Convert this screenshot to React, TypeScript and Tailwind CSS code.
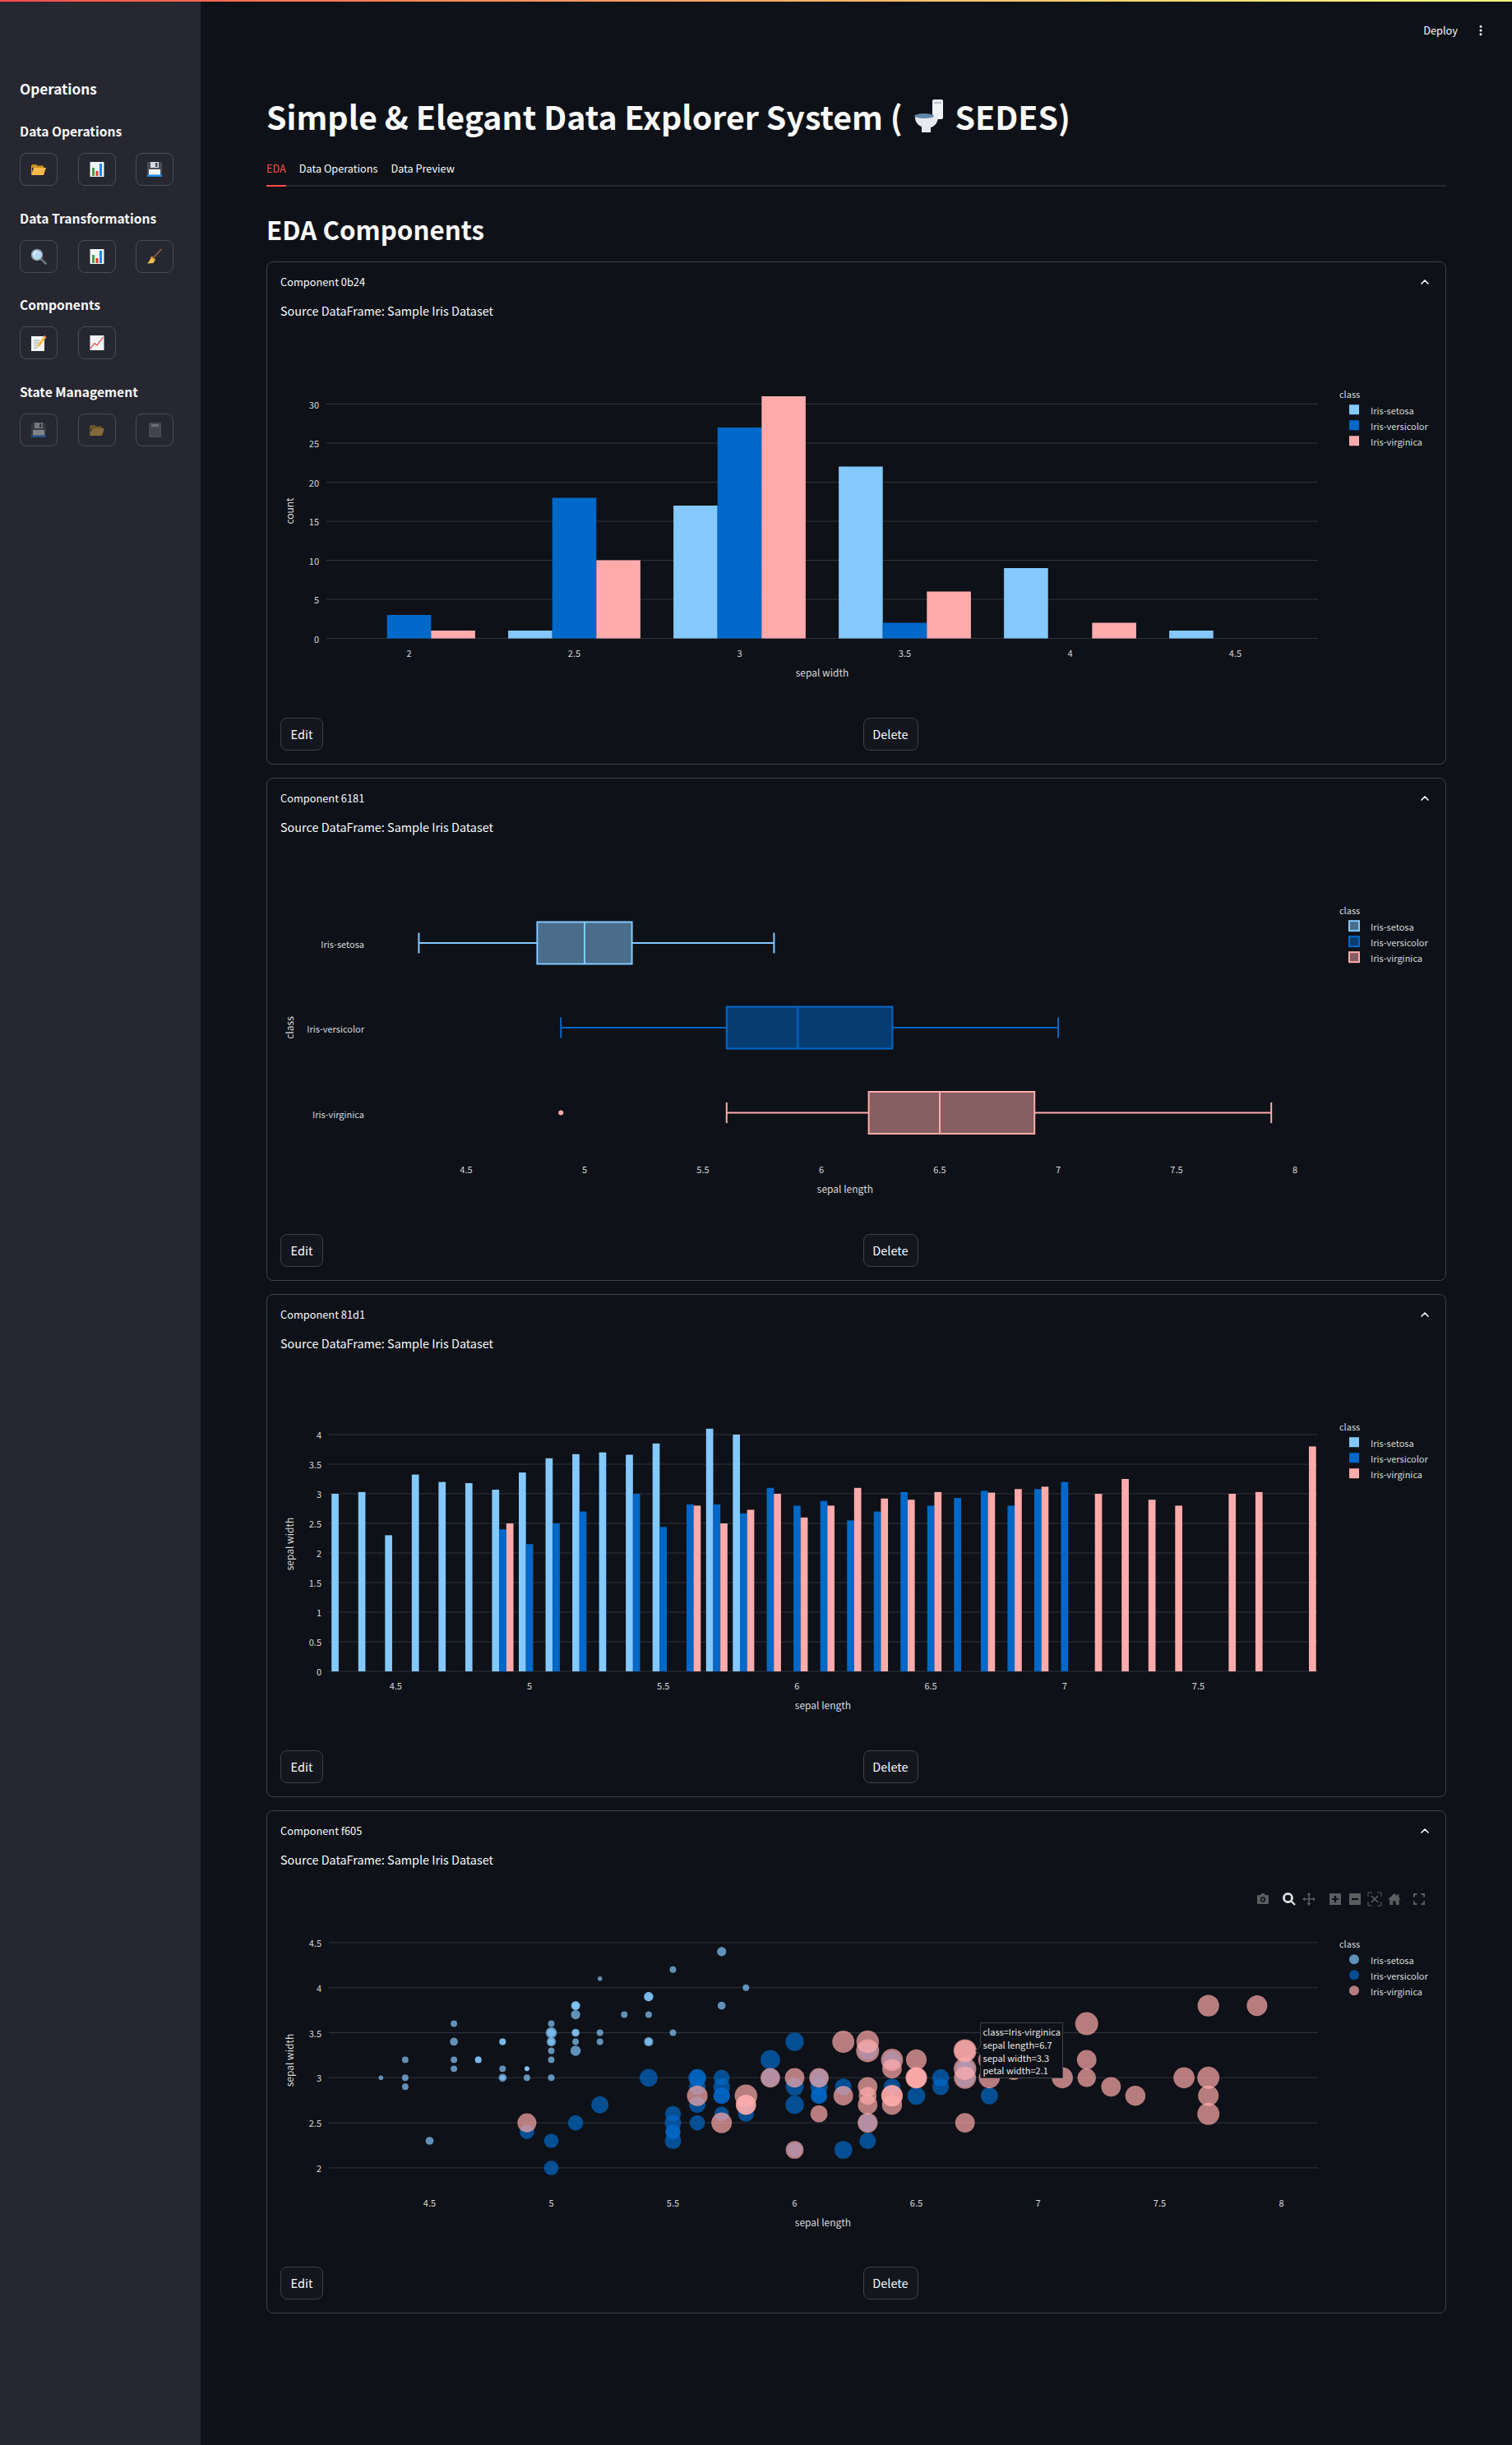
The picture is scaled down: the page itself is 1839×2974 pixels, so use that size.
import React from 'react';
import { ChevronUp, EllipsisVertical } from 'lucide-react';

const BLUE = '#83c9ff';
const NAVY = '#0068c9';
const PINK = '#ffabab';
const GRID = '#31333f';
const TICK = '#d8d9db';
const CLASSES = ['Iris-setosa', 'Iris-versicolor', 'Iris-virginica'];
const COLORS = [BLUE, NAVY, PINK];

// [sepal length, sepal width, petal width]
const SETOSA = [[5.1,3.5,.2],[4.9,3,.2],[4.7,3.2,.2],[4.6,3.1,.2],[5,3.6,.2],[5.4,3.9,.4],[4.6,3.4,.3],[5,3.4,.2],[4.4,2.9,.2],[4.9,3.1,.1],[5.4,3.7,.2],[4.8,3.4,.2],[4.8,3,.1],[4.3,3,.1],[5.8,4,.2],[5.7,4.4,.4],[5.4,3.9,.4],[5.1,3.5,.3],[5.7,3.8,.3],[5.1,3.8,.3],[5.4,3.4,.2],[5.1,3.7,.4],[4.6,3.6,.2],[5.1,3.3,.5],[4.8,3.4,.2],[5,3,.2],[5,3.4,.4],[5.2,3.5,.2],[5.2,3.4,.2],[4.7,3.2,.2],[4.8,3.1,.2],[5.4,3.4,.4],[5.2,4.1,.1],[5.5,4.2,.2],[4.9,3.1,.1],[5,3.2,.2],[5.5,3.5,.2],[4.9,3.1,.1],[4.4,3,.2],[5.1,3.4,.2],[5,3.5,.3],[4.5,2.3,.3],[4.4,3.2,.2],[5,3.5,.6],[5.1,3.8,.4],[4.8,3,.3],[5.1,3.8,.2],[4.6,3.2,.2],[5.3,3.7,.2],[5,3.3,.2]];
const VERSICOLOR = [[7,3.2,1.4],[6.4,3.2,1.5],[6.9,3.1,1.5],[5.5,2.3,1.3],[6.5,2.8,1.5],[5.7,2.8,1.3],[6.3,3.3,1.6],[4.9,2.4,1],[6.6,2.9,1.3],[5.2,2.7,1.4],[5,2,1],[5.9,3,1.5],[6,2.2,1],[6.1,2.9,1.4],[5.6,2.9,1.3],[6.7,3.1,1.4],[5.6,3,1.5],[5.8,2.7,1],[6.2,2.2,1.5],[5.6,2.5,1.1],[5.9,3.2,1.8],[6.1,2.8,1.3],[6.3,2.5,1.5],[6.1,2.8,1.2],[6.4,2.9,1.3],[6.6,3,1.4],[6.8,2.8,1.4],[6.7,3,1.7],[6,2.9,1.5],[5.7,2.6,1],[5.5,2.4,1.1],[5.5,2.4,1],[5.8,2.7,1.2],[6,2.7,1.6],[5.4,3,1.5],[6,3.4,1.6],[6.7,3.1,1.5],[6.3,2.3,1.3],[5.6,3,1.3],[5.5,2.5,1.3],[5.5,2.6,1.2],[6.1,3,1.4],[5.8,2.6,1.2],[5,2.3,1],[5.6,2.7,1.3],[5.7,3,1.2],[5.7,2.9,1.3],[6.2,2.9,1.3],[5.1,2.5,1.1],[5.7,2.8,1.3]];
const VIRGINICA = [[6.3,3.3,2.5],[5.8,2.7,1.9],[7.1,3,2.1],[6.3,2.9,1.8],[6.5,3,2.2],[7.6,3,2.1],[4.9,2.5,1.7],[7.3,2.9,1.8],[6.7,2.5,1.8],[7.2,3.6,2.5],[6.5,3.2,2],[6.4,2.7,1.9],[6.8,3,2.1],[5.7,2.5,2],[5.8,2.8,2.4],[6.4,3.2,2.3],[6.5,3,1.8],[7.7,3.8,2.2],[7.7,2.6,2.3],[6,2.2,1.5],[6.9,3.2,2.3],[5.6,2.8,2],[7.7,2.8,2],[6.3,2.7,1.8],[6.7,3.3,2.1],[7.2,3.2,1.8],[6.2,2.8,1.8],[6.1,3,1.8],[6.4,2.8,2.1],[7.2,3,1.6],[7.4,2.8,1.9],[7.9,3.8,2],[6.4,2.8,2.2],[6.3,2.8,1.5],[6.1,2.6,1.4],[7.7,3,2.3],[6.3,3.4,2.4],[6.4,3.1,1.8],[6,3,1.8],[6.9,3.1,2.1],[6.7,3.1,2.4],[6.9,3.1,2.3],[5.8,2.7,1.9],[6.8,3.2,2.3],[6.7,3.3,2.5],[6.7,3,2.3],[6.3,2.5,1.9],[6.5,3,2],[6.2,3.4,2.3],[5.9,3,1.8]];

// average sepal width per sepal length, as [length, setosa, versicolor, virginica]
const AVERAGES = [[4.3,3],[4.4,3.03],[4.5,2.3],[4.6,3.325],[4.7,3.2],[4.8,3.18],[4.9,3.07,2.4,2.5],[5,3.36,2.15],[5.1,3.6,2.5],[5.2,3.67,2.7],[5.3,3.7],[5.4,3.66,3],[5.5,3.85,2.44],[5.6,0,2.82,2.8],[5.7,4.1,2.82,2.5],[5.8,4,2.67,2.73],[5.9,0,3.1,3],[6,0,2.8,2.6],[6.1,0,2.88,2.8],[6.2,0,2.55,3.1],[6.3,0,2.7,2.92],[6.4,0,3.03,2.9],[6.5,0,2.8,3.03],[6.6,0,2.93],[6.7,0,3.05,3.02],[6.8,0,2.8,3.08],[6.9,0,3.08,3.12],[7,0,3.2],[7.1,0,0,3],[7.2,0,0,3.25],[7.3,0,0,2.9],[7.4,0,0,2.8],[7.6,0,0,3],[7.7,0,0,3.03],[7.9,0,0,3.8]];

const COUNTS = [[2,0,3,1],[2.5,1,18,10],[3,17,27,31],[3.5,22,2,6],[4,9,0,2],[4.5,1,0,0]];

const BOXES = [
  { y: 117, low: 4.3, q1: 4.8, med: 5, q3: 5.2, high: 5.8 },
  { y: 220, low: 4.9, q1: 5.6, med: 5.9, q3: 6.3, high: 7 },
  { y: 323.5, low: 5.6, q1: 6.2, med: 6.5, q3: 6.9, high: 7.9 },
];

function Label({ x, y, children, anchor = 'start', size = 11, fill = TICK }: { x: number; y: number; children: React.ReactNode; anchor?: 'start' | 'middle' | 'end'; size?: number; fill?: string }) {
  return <text x={x} y={y} fontSize={size} fill={fill} textAnchor={anchor} dominantBaseline="central">{children}</text>;
}

function YTitle({ x, y, children }: { x: number; y: number; children: string }) {
  return <text x={x} y={y} fontSize={12} fill={TICK} textAnchor="middle" dominantBaseline="central" transform={`rotate(-90 ${x} ${y})`}>{children}</text>;
}

function Legend({ top, kind }: { top: number; kind: 'square' | 'box' | 'dot' }) {
  return (
    <g>
      <Label x={1288} y={top}>class</Label>
      {CLASSES.map((name, i) => {
        const cy = top + 19.2 + i * 19;
        return (
          <g key={name}>
            {kind === 'square' && <rect x={1300} y={cy - 6} width={12} height={12} fill={COLORS[i]} />}
            {kind === 'box' && <rect x={1300} y={cy - 6} width={12} height={12} fill={COLORS[i]} fillOpacity={0.5} stroke={COLORS[i]} strokeWidth={2} />}
            {kind === 'dot' && <circle cx={1306} cy={cy} r={6} fill={COLORS[i]} fillOpacity={0.7} />}
            <Label x={1326} y={cy + 0.5}>{name}</Label>
          </g>
        );
      })}
    </g>
  );
}

function ChartFrame({ children }: { children: React.ReactNode }) {
  return (
    <svg width={1401} height={450} viewBox="0 0 1401 450" className="block">
      {children}
    </svg>
  );
}

function Histogram() {
  const x = (v: number) => 156.5 + (v - 2) * 402;
  const y = (v: number) => 374.5 - v * 9.5;
  return (
    <ChartFrame>
      {[0, 5, 10, 15, 20, 25, 30].map((t) => (
        <g key={t}>
          <line x1={56} x2={1262} y1={y(t)} y2={y(t)} stroke={GRID} />
          <Label x={47} y={y(t)} anchor="end">{t}</Label>
        </g>
      ))}
      {COUNTS.map(([v, ...values]) => (
        <g key={v}>
          {values.map((n, i) => n > 0 && <rect key={i} x={x(v) - 80.4 + i * 53.6} y={y(n)} width={53.6} height={n * 9.5} fill={COLORS[i]} />)}
          <Label x={x(v)} y={392} anchor="middle">{v}</Label>
        </g>
      ))}
      <Label x={659} y={415.5} anchor="middle" size={12}>sepal width</Label>
      <YTitle x={10} y={219.5}>count</YTitle>
      <Legend top={77} kind="square" />
    </ChartFrame>
  );
}

function BoxPlot() {
  const x = (v: number) => 370 + (v - 5) * 288;
  return (
    <ChartFrame>
      {BOXES.map((b, i) => (
        <g key={i} stroke={COLORS[i]} strokeWidth={2}>
          <line x1={x(b.low)} x2={x(b.q1)} y1={b.y} y2={b.y} />
          <line x1={x(b.q3)} x2={x(b.high)} y1={b.y} y2={b.y} />
          <line x1={x(b.low)} x2={x(b.low)} y1={b.y - 12.5} y2={b.y + 12.5} />
          <line x1={x(b.high)} x2={x(b.high)} y1={b.y - 12.5} y2={b.y + 12.5} />
          <rect x={x(b.q1)} y={b.y - 25.5} width={x(b.q3) - x(b.q1)} height={51} fill={COLORS[i]} fillOpacity={0.5} />
          <line x1={x(b.med)} x2={x(b.med)} y1={b.y - 25.5} y2={b.y + 25.5} />
        </g>
      ))}
      <circle cx={x(4.9)} cy={323.5} r={3} fill={PINK} />
      {CLASSES.map((name, i) => (
        <Label key={name} x={102} y={BOXES[i].y + 1} anchor="end">{name}</Label>
      ))}
      {[4.5, 5, 5.5, 6, 6.5, 7, 7.5, 8].map((t) => (
        <Label key={t} x={x(t)} y={392} anchor="middle">{t}</Label>
      ))}
      <Label x={687} y={415.5} anchor="middle" size={12}>sepal length</Label>
      <YTitle x={10} y={220}>class</YTitle>
      <Legend top={77} kind="box" />
    </ChartFrame>
  );
}

function AverageBars() {
  const x = (v: number) => 303 + (v - 5) * 325.4;
  const y = (v: number) => 375 - v * 72;
  return (
    <ChartFrame>
      {[0, 0.5, 1, 1.5, 2, 2.5, 3, 3.5, 4].map((t) => (
        <g key={t}>
          <line x1={59} x2={1262} y1={y(t)} y2={y(t)} stroke={GRID} />
          <Label x={50} y={y(t)} anchor="end">{t}</Label>
        </g>
      ))}
      {AVERAGES.map(([v, ...values]) => (
        <g key={v}>
          {values.map((n, i) => n > 0 && <rect key={i} x={x(v) - 13 + i * 8.68} y={y(n)} width={8.68} height={n * 72} fill={COLORS[i]} />)}
        </g>
      ))}
      {[4.5, 5, 5.5, 6, 6.5, 7, 7.5].map((t) => (
        <Label key={t} x={x(t)} y={392} anchor="middle">{t}</Label>
      ))}
      <Label x={660} y={415.5} anchor="middle" size={12}>sepal length</Label>
      <YTitle x={10} y={220}>sepal width</YTitle>
      <Legend top={77} kind="square" />
    </ChartFrame>
  );
}

function ModeBar() {
  const c = '#5c5d60';
  return (
    <g>
      <g transform="translate(1187 16)" fill={c}>
        <path fillRule="evenodd" d="M5 3 6.5 1h3L11 3h2.5A1.5 1.5 0 0 1 15 4.5v8a1.5 1.5 0 0 1-1.5 1.5h-11A1.5 1.5 0 0 1 1 12.5v-8A1.5 1.5 0 0 1 2.5 3zM8 5.2a3.2 3.2 0 1 0 0 6.4 3.2 3.2 0 0 0 0-6.4zm0 1.6a1.6 1.6 0 1 1 0 3.2 1.6 1.6 0 0 1 0-3.2z" />
      </g>
      <g transform="translate(1219 16)">
        <circle cx={6.5} cy={6.5} r={5} fill="none" stroke="#dcdcdc" strokeWidth={3} />
        <rect x={4} y={4} width={5} height={5} fill="none" stroke="#0e1117" strokeWidth={0.8} />
        <path d="M10.5 10.5 15 15" stroke="#dcdcdc" strokeWidth={2.4} />
      </g>
      <g transform="translate(1243 16)" stroke={c} fill={c}>
        <path d="M8 1v14M1 8h14" strokeWidth={1.6} />
        <path d="M8 0 5.5 3h5zM8 16l-2.5-3h5zM0 8l3-2.5v5zM16 8l-3-2.5v5z" strokeWidth={0} />
      </g>
      <g transform="translate(1276 17)">
        <rect width={14} height={14} fill={c} />
        <path d="M7 3v8M3 7h8" stroke="#0e1117" strokeWidth={2.2} />
      </g>
      <g transform="translate(1300 17)">
        <rect width={14} height={14} fill={c} />
        <path d="M3 7h8" stroke="#0e1117" strokeWidth={2.2} />
      </g>
      <g transform="translate(1323 16)" fill="none" stroke={c} strokeWidth={1}>
        <path d="M0 5V0h5M11 0h5v5M16 11v5h-5M5 16H0v-5" />
        <path d="M4 4l8 8M12 4l-8 8" strokeWidth={1.6} />
      </g>
      <g transform="translate(1347 16)" fill={c}>
        <path d="M8 1 0 8.5h2.3V15h4v-4.5h3.4V15h4V8.5H16l-2.6-2.4V2h-2v2.2z" />
      </g>
      <g transform="translate(1378 17)" fill="none" stroke={c} strokeWidth={2}>
        <path d="M1 4.5V1h3.5M9.500 1H13v3.500M13 9.500V13H9.500M4.500 13H1V9.500" />
      </g>
    </g>
  );
}

function Scatter() {
  const x = (v: number) => 329.5 + (v - 5) * 296;
  const y = (v: number) => 241.3 - (v - 3) * 109.6;
  const groups = [SETOSA, VERSICOLOR, VIRGINICA];
  return (
    <ChartFrame>
      {[2, 2.5, 3, 3.5, 4, 4.5].map((t) => (
        <g key={t}>
          <line x1={59} x2={1262} y1={y(t)} y2={y(t)} stroke={GRID} />
          <Label x={50} y={y(t)} anchor="end">{t}</Label>
        </g>
      ))}
      {groups.map((rows, i) => (
        <g key={i}>
          {rows.map(([sl, sw, pw], j) => (
            <circle key={j} cx={x(sl)} cy={y(sw)} r={14 * Math.sqrt(pw / 2.5)} fill={COLORS[i]} fillOpacity={0.7} />
          ))}
        </g>
      ))}
      {[4.5, 5, 5.5, 6, 6.5, 7, 7.5, 8].map((t) => (
        <Label key={t} x={x(t)} y={393} anchor="middle">{t}</Label>
      ))}
      <Label x={660} y={416.5} anchor="middle" size={12}>sepal length</Label>
      <YTitle x={10} y={220}>sepal width</YTitle>
      <ModeBar />
      <Legend top={78} kind="dot" />
      <g>
        <path d="M845.500 208.500 851.700 203V174.500H951.500V241.500H851.700V214z" fill="#0e1117" stroke="#444" />
        {['class=Iris-virginica', 'sepal length=6.7', 'sepal width=3.3', 'petal width=2.1'].map((line, i) => (
          <Label key={line} x={854.5} y={185 + i * 15.8} fill="#e8e8e8">{line}</Label>
        ))}
      </g>
    </ChartFrame>
  );
}

function FolderIcon() {
  return (
    <svg width={20} height={20} viewBox="0 0 20 20">
      <path d="M2 4h5l1.500 1.500H16V8H2z" fill="#c58f24" />
      <path d="M1 17 4 8h15l-3 9z" fill="#f6bb47" />
      <path d="M1 17V5h1v9z" fill="#e0a02f" />
    </svg>
  );
}

function BarsIcon() {
  return (
    <svg width={20} height={20} viewBox="0 0 20 20">
      <rect x={1.500} y={1} width={17} height={18} fill="#f3f5f6" />
      <rect x={4} y={8} width={3} height={10} fill="#43a047" />
      <rect x={8.500} y={12} width={3} height={6} fill="#e53935" />
      <rect x={13} y={3} width={3} height={15} fill="#1e88e5" />
    </svg>
  );
}

function FloppyIcon() {
  return (
    <svg width={20} height={20} viewBox="0 0 20 20">
      <path d="M1 1h16l2 2v16H1z" fill="#4a4d55" />
      <rect x={5} y={1} width={10} height={7} fill="#d6d8db" />
      <rect x={11} y={2} width={2.500} height={5} fill="#4a4d55" />
      <rect x={3} y={10} width={14} height={9} fill="#f3f5f6" />
      <rect x={1} y={16.500} width={18} height={2.500} fill="#1e88e5" />
    </svg>
  );
}

function SearchIcon() {
  return (
    <svg width={20} height={20} viewBox="0 0 20 20">
      <path d="m12 12 6.500 6.500" stroke="#6b7178" strokeWidth={2.800} strokeLinecap="round" />
      <circle cx={8} cy={8} r={6.500} fill="#b6dcf2" stroke="#8d9aa3" strokeWidth={1.500} />
      <path d="M4 8a4 4 0 0 1 4-4" stroke="#fff" strokeWidth={1.200} fill="none" />
    </svg>
  );
}

function BroomIcon() {
  return (
    <svg width={20} height={20} viewBox="0 0 20 20">
      <path d="M18.500 1 9 11" stroke="#a5673f" strokeWidth={1.300} />
      <path d="M6.500 9.500 11 13.500 8.500 18 1 18.500C3.500 16.500 5 13 6.500 9.500z" fill="#f2c14e" />
      <path d="m6.500 9.500 4.500 4-1 1.300-4.500-3.800z" fill="#c98a2c" />
    </svg>
  );
}

function MemoIcon() {
  return (
    <svg width={20} height={20} viewBox="0 0 20 20">
      <rect x={1} y={2} width={16} height={18} fill="#f3f5f6" />
      <path d="M4 7h7M4 10h6M4 13h4M4 16h4" stroke="#8d98a3" />
      <path d="M17 1 19.500 3 11 14.500 8 16l.5-3.500z" fill="#f6bb47" />
      <path d="M17 1 19.500 3 18.500 4.400 16 2.500z" fill="#e57373" />
    </svg>
  );
}

function TrendIcon() {
  return (
    <svg width={20} height={20} viewBox="0 0 20 20">
      <rect x={1.500} y={1} width={17} height={18} fill="#f3f5f6" />
      <path d="M2 17 7 10.500 10 13 17.500 3" fill="none" stroke="#e53935" strokeWidth={1.200} />
    </svg>
  );
}

function NotebookIcon() {
  return (
    <svg width={20} height={20} viewBox="0 0 20 20">
      <rect x={3} y={1} width={15} height={18} rx={1} fill="#6e7076" />
      <rect x={6} y={3} width={9} height={3} fill="#c5c7cb" />
      <path d="M5 9h10M5 12h10M5 15h10" stroke="#3d3f45" strokeDasharray="1 1" />
    </svg>
  );
}

function ToiletIcon() {
  return (
    <svg width={46} height={44} viewBox="0 0 46 44" className="inline-block align-middle">
      <rect x={27} y={2} width={13} height={24} rx={2} fill="#f1f3f5" />
      <rect x={29} y={5} width={9} height={2} fill="#b9c3cc" />
      <path d="M6 23h28c0 8-5 12-9 13v6H14v-7C9 33 6 29 6 23z" fill="#e6eaee" />
      <ellipse cx={17} cy={22} rx={12} ry={3} fill="#5e86a8" />
    </svg>
  );
}

function SideSection({ title, children }: { title: string; children: React.ReactNode }) {
  return (
    <div className="mt-[25.5px]">
      <h3 className="h-[26px] text-[15.6px] leading-[26px] font-semibold text-[#fafafa]">{title}</h3>
      <div className="mt-[14px] flex gap-[24.5px]">{children}</div>
    </div>
  );
}

function IconButton({ children, dim }: { children: React.ReactNode; dim?: boolean }) {
  return (
    <div className="flex h-10 w-[46px] items-center justify-center rounded-lg border border-[#4a4b54] bg-[#262730]">
      <div className={dim ? 'opacity-45' : ''}>{children}</div>
    </div>
  );
}

function Card({ name, children }: { name: string; children: React.ReactNode }) {
  return (
    <section className="h-[612px] rounded-lg border border-[#3e4046] px-4">
      <div className="flex h-[46px] items-center justify-between pt-[1px]">
        <span className="text-[12.8px] text-[#fafafa]">{name}</span>
        <ChevronUp size={16} strokeWidth={2.500} className="mr-[1px] text-[#fafafa]" />
      </div>
      <p className="h-[37px] pt-[1px] text-[14.4px] leading-[24px] text-[#fafafa]">Source DataFrame: Sample Iris Dataset</p>
      {children}
      <div className="mt-[21px] grid grid-cols-2 gap-4">
        <div>
          <button className="h-10 w-[52px] rounded-lg border border-[#3e4046] bg-[#13161d] text-[14.5px] text-[#fafafa]">Edit</button>
        </div>
        <div>
          <button className="h-10 w-[67px] rounded-lg border border-[#3e4046] bg-[#13161d] text-[14.5px] text-[#fafafa]">Delete</button>
        </div>
      </div>
    </section>
  );
}

export default function App() {
  return (
    <div className="relative flex min-h-[2974px] bg-[#0e1117] font-['Noto_Sans_CJK_SC','Source_Sans_Pro',sans-serif] text-[#fafafa]">
      <div className="absolute inset-x-0 top-0 h-[2px] bg-gradient-to-r from-[#ff4b4b] to-[#fffd80]" />
      <aside className="w-[244px] shrink-0 bg-[#262730] px-6 pt-[93px]">
        <h2 className="h-[30px] text-[17.2px] leading-[30px] font-semibold">Operations</h2>
        <div className="-mt-[2.5px]">
          <SideSection title="Data Operations">
            <IconButton><FolderIcon /></IconButton>
            <IconButton><BarsIcon /></IconButton>
            <IconButton><FloppyIcon /></IconButton>
          </SideSection>
          <SideSection title="Data Transformations">
            <IconButton><SearchIcon /></IconButton>
            <IconButton><BarsIcon /></IconButton>
            <IconButton><BroomIcon /></IconButton>
          </SideSection>
          <SideSection title="Components">
            <IconButton><MemoIcon /></IconButton>
            <IconButton><TrendIcon /></IconButton>
          </SideSection>
          <SideSection title="State Management">
            <IconButton dim><FloppyIcon /></IconButton>
            <IconButton dim><FolderIcon /></IconButton>
            <IconButton dim><NotebookIcon /></IconButton>
          </SideSection>
        </div>
      </aside>

      <main className="min-w-0 flex-1">
        <header className="flex h-[74px] items-center justify-end gap-5 pr-[30px]">
          <span className="text-[12.8px]">Deploy</span>
          <EllipsisVertical size={16} strokeWidth={2.500} />
        </header>
        <div className="px-20">
          <h1 className="mt-[32px] flex h-[70px] items-center whitespace-pre text-[39.3px] leading-[70px] font-bold">
            Simple &amp; Elegant Data Explorer System ( <ToiletIcon /> SEDES)
          </h1>
          <nav className="mt-[17px] flex h-[34px] items-start gap-4 border-b-2 border-[#262730] text-[12.7px] leading-[24px]">
            <span className="h-[34px] border-b-2 border-[#ff4b4b] text-[#ff4b4b]">EDA</span>
            <span>Data Operations</span>
            <span>Data Preview</span>
          </nav>
          <h2 className="mt-[24px] h-[56px] text-[31.3px] leading-[56px] font-semibold">EDA Components</h2>
          <div className="mt-[11px] flex flex-col gap-4">
            <Card name="Component 0b24"><Histogram /></Card>
            <Card name="Component 6181"><BoxPlot /></Card>
            <Card name="Component 81d1"><AverageBars /></Card>
            <Card name="Component f605"><Scatter /></Card>
          </div>
        </div>
      </main>
    </div>
  );
}
